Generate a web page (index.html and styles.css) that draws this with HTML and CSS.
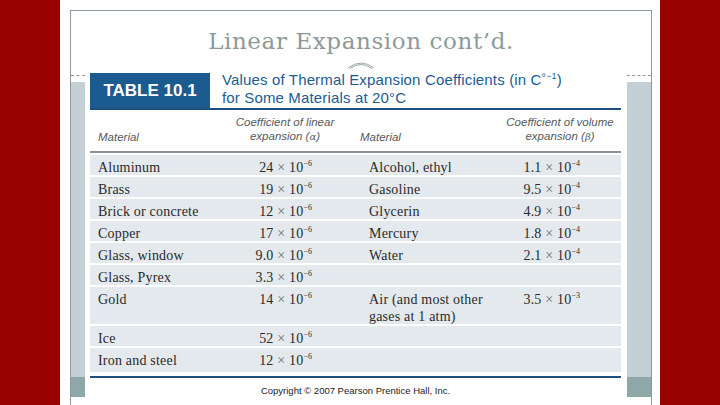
FILE: index.html
```html
<!DOCTYPE html>
<html>
<head>
<meta charset="utf-8">
<link rel="stylesheet" href="styles.css">
</head>
<body>
<div class="slide">
  <div class="frame">
    <div class="titlebar">
      <h1 class="title">Linear Expansion cont’d.</h1>
      <svg class="orn" width="28" height="10" viewBox="0 0 28 10">
        <path d="M1 9 Q14 -1 27 9" fill="none" stroke="#9aa6a8" stroke-width="1"/>
        <path d="M3 9.5 Q14 1.5 25 9.5" fill="none" stroke="#9aa6a8" stroke-width="1"/>
      </svg>
    </div>
    <div class="main">
      <div class="side side-left">
        <div class="dash"></div>
        <div class="bar"><div class="bar-foot"></div></div>
      </div>
      <div class="figure">
        <div class="caption">
          <div class="tag">TABLE 10.1</div>
          <div class="caption-text">Values of Thermal Expansion Coefficients (in C<span class="deg">°</span><span class="capsup">−1</span>)<br>for Some Materials at 20°C</div>
        </div>
        <div class="rule-blue"></div>
        <div class="colhead">
          <div class="ch ch-mat">Material</div>
          <div class="ch ch-coef">Coefficient of linear<br>expansion (<i>α</i>)</div>
          <div class="ch ch-mat2">Material</div>
          <div class="ch ch-coef">Coefficient of volume<br>expansion (<i>β</i>)</div>
        </div>
        <div class="rule-grey"></div>
        <div class="rows">
          <div class="row"><span class="m">Aluminum</span><span class="v">24 <span class="x">×</span> 10<span class="sup">−6</span></span><span class="m2">Alcohol, ethyl</span><span class="v">1.1 <span class="x">×</span> 10<span class="sup">−4</span></span></div>
          <div class="row"><span class="m">Brass</span><span class="v">19 <span class="x">×</span> 10<span class="sup">−6</span></span><span class="m2">Gasoline</span><span class="v">9.5 <span class="x">×</span> 10<span class="sup">−4</span></span></div>
          <div class="row"><span class="m">Brick or concrete</span><span class="v">12 <span class="x">×</span> 10<span class="sup">−6</span></span><span class="m2">Glycerin</span><span class="v">4.9 <span class="x">×</span> 10<span class="sup">−4</span></span></div>
          <div class="row"><span class="m">Copper</span><span class="v">17 <span class="x">×</span> 10<span class="sup">−6</span></span><span class="m2">Mercury</span><span class="v">1.8 <span class="x">×</span> 10<span class="sup">−4</span></span></div>
          <div class="row"><span class="m">Glass, window</span><span class="v">9.0 <span class="x">×</span> 10<span class="sup">−6</span></span><span class="m2">Water</span><span class="v">2.1 <span class="x">×</span> 10<span class="sup">−4</span></span></div>
          <div class="row"><span class="m">Glass, Pyrex</span><span class="v">3.3 <span class="x">×</span> 10<span class="sup">−6</span></span><span class="m2"></span><span class="v"></span></div>
          <div class="row row-tall"><span class="m">Gold</span><span class="v">14 <span class="x">×</span> 10<span class="sup">−6</span></span><span class="m2">Air (and most other<br>gases at 1 atm)</span><span class="v">3.5 <span class="x">×</span> 10<span class="sup">−3</span></span></div>
          <div class="row"><span class="m">Ice</span><span class="v">52 <span class="x">×</span> 10<span class="sup">−6</span></span><span class="m2"></span><span class="v"></span></div>
          <div class="row row-last"><span class="m">Iron and steel</span><span class="v">12 <span class="x">×</span> 10<span class="sup">−6</span></span><span class="m2"></span><span class="v"></span></div>
        </div>
        <div class="rule-blue rule-bottom"></div>
        <div class="copyright">Copyright © 2007 Pearson Prentice Hall, Inc.</div>
      </div>
      <div class="side side-right">
        <div class="dash"></div>
        <div class="bar"><div class="bar-foot"></div></div>
      </div>
    </div>
  </div>
</div>
</body>
</html>
```
FILE: styles.css
```css
* { box-sizing: border-box; }
html, body { margin: 0; padding: 0; }
body {
  background: #990000;
  width: 720px;
  height: 405px;
  overflow: hidden;
}
.slide {
  width: 600px;
  height: 405px;
  margin-left: 60px;
  background: #ffffff;
  padding: 10px 0 0 10px;
}
.frame {
  width: 582px;
  height: 395px;
  border: 1px solid #8d9a9c;
  border-bottom: none;
  display: flex;
  flex-direction: column;
}
.titlebar {
  height: 59px;
  display: flex;
  flex-direction: column;
  align-items: center;
}
.title {
  margin: 15px 0 0;
  font-family: "DejaVu Serif", serif;
  font-weight: normal;
  font-size: 23px;
  line-height: 30px;
  letter-spacing: 0.6px;
  color: #8d9a9b;
}
.orn {
  display: block;
  margin-top: 3px;
}
.main {
  flex: 1;
  display: flex;
}
.side {
  display: flex;
  flex-direction: column;
  padding-top: 5px;
}
.side-left { width: 14px; }
.side-right { width: 24px; }
.dash {
  border-top: 1px dashed #8d9a9c;
  height: 1px;
}
.bar {
  margin-top: 6px;
  height: 315px;
  background: #c5d0d6;
  display: flex;
  flex-direction: column;
  justify-content: flex-end;
}
.bar-foot {
  height: 20px;
  background: #8ea8aa;
}
.figure {
  width: 542px;
  background: #ffffff;
  padding: 0 6px 0 5px;
  font-family: "Liberation Sans", Arial, sans-serif;
}
.caption {
  display: flex;
  align-items: flex-start;
}
.tag {
  margin-top: 3px;
  width: 120px;
  height: 35px;
  background: #1b5b8f;
  color: #ffffff;
  font-weight: bold;
  font-size: 17px;
  display: flex;
  align-items: center;
  justify-content: center;
  padding-top: 1px;
}
.caption-text {
  margin-left: 12px;
  padding-top: 1px;
  font-size: 15px;
  line-height: 18px;
  color: #215c92;
  letter-spacing: 0.15px;
}
.deg { font-size: 11px; vertical-align: 4px; line-height: 0; }
.capsup { font-size: 9px; vertical-align: 6px; line-height: 0; }
.rule-blue {
  height: 2px;
  background: #1e4f7e;
}
.colhead {
  height: 41px;
  display: grid;
  grid-template-columns: 130px 130px 149px 122px;
  align-items: end;
  padding-bottom: 7px;
  font-size: 11.5px;
  line-height: 14px;
  font-style: italic;
  color: #555a5e;
}
.ch-mat { padding-left: 8px; }
.ch-mat2 { padding-left: 10px; }
.ch-coef { text-align: center; }
.ch i { font-family: "DejaVu Serif", serif; font-size: 10px; }
.rule-grey {
  height: 2px;
  background: #8b9296;
}
.rows {
  padding-top: 2px;
  display: flex;
  flex-direction: column;
  gap: 2px;
}
.row {
  display: grid;
  grid-template-columns: 160px 62px 206px 62px 41px;
  background: #e3e9ed;
  padding: 4px 0 0;
  height: 20px;
  font-family: "Liberation Serif", "Times New Roman", serif;
  font-size: 14px;
  line-height: 17px;
  color: #2b2b2b;
  letter-spacing: 0.2px;
}
.row-tall { height: 37px; }
.row-last { height: 24px; }
.m { padding-left: 8px; }
.m2 { padding-left: 57px; white-space: nowrap; }
.v { text-align: right; white-space: nowrap; }
.x { color: #6a6e72; }
.sup { font-size: 8px; vertical-align: 6px; line-height: 0; letter-spacing: 0; }
.rule-bottom { margin-top: 4px; }
.copyright {
  margin-top: 6px;
  text-align: center;
  font-size: 9.5px;
  line-height: 14px;
  color: #222222;
}
```
